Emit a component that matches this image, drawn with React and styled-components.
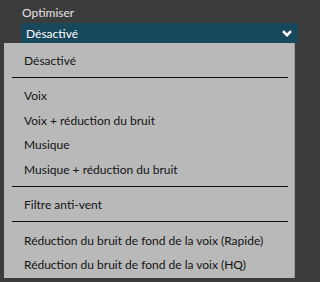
import React from 'react';
import styled, { createGlobalStyle } from 'styled-components';

const groups = [
  ['Désactivé'],
  ['Voix', 'Voix + réduction du bruit', 'Musique', 'Musique + réduction du bruit'],
  ['Filtre anti-vent'],
  ['Réduction du bruit de fond de la voix (Rapide)', 'Réduction du bruit de fond de la voix (HQ)'],
];

export default function App() {
  return (
    <Page>
      <Label>Optimiser</Label>
      <SelectWrap>
        <SelectBar>
          <span>Désactivé</span>
          <Chevron viewBox="0 0 10 7">
            <polyline points="1,1.2 5,5.2 9,1.2" />
          </Chevron>
        </SelectBar>
        <Menu>
          {groups.map((items, gi) => (
            <React.Fragment key={gi}>
              {gi > 0 && <Separator />}
              {items.map((item) => (
                <Item key={item}>{item}</Item>
              ))}
            </React.Fragment>
          ))}
        </Menu>
      </SelectWrap>
      <GlobalStyles />
    </Page>
  );
}

const Page = styled.div`
  width: 298px;
  height: 282px;
  background: #3c3c3c;
  overflow: hidden;
  display: flex;
  flex-direction: column;
`;

const Label = styled.div`
  color: #e2e2e2;
  font-size: 12px;
  line-height: 16px;
  padding: 5px 0 2px 22px;
`;

const SelectWrap = styled.div`
  position: relative;
  margin-left: 21px;
`;

const SelectBar = styled.div`
  height: 20px;
  background: #17485c;
  color: #ffffff;
  font-size: 12px;
  display: flex;
  align-items: center;
  justify-content: space-between;
  padding: 0 6px 0 5px;
`;

const Chevron = styled.svg`
  width: 10px;
  height: 7px;
  fill: none;
  stroke: #ffffff;
  stroke-width: 2.6;
`;

const Menu = styled.div`
  position: absolute;
  top: 100%;
  left: -17px;
  width: 291px;
  background: #b9b9b9;
  border-right: 1px solid #9a9a9a;
  padding: 5px 0 1px;
  box-sizing: border-box;
`;

const Item = styled.div`
  height: 24.5px;
  display: flex;
  align-items: center;
  padding-left: 20px;
  color: #141414;
  font-size: 12px;
`;

const Separator = styled.div`
  height: 1px;
  background: #111111;
  margin: 4px 6px 6px 8px;
`;

const GlobalStyles = createGlobalStyle`
  body, html {
    margin: 0;
    padding: 0;
    background: #3c3c3c;
  }

  body * {
    font-family: Lato, "Noto Sans", sans-serif;
  }
`;
